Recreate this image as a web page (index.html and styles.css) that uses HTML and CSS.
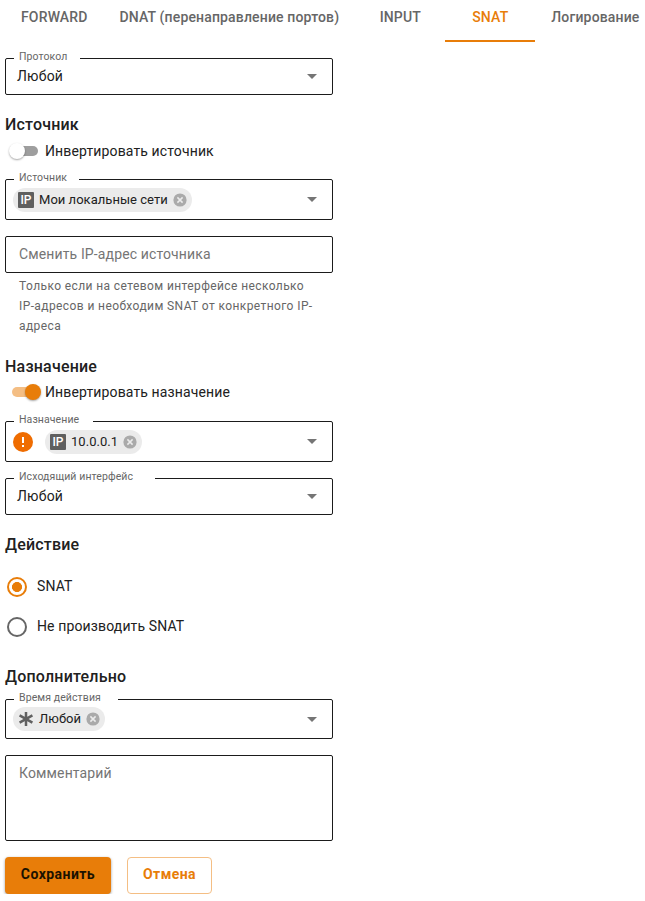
FILE: index.html
```html
<!DOCTYPE html>
<html lang="ru">
<head>
<meta charset="utf-8">
<title>SNAT</title>
<link rel="stylesheet" href="styles.css">
</head>
<body>
<nav class="tabs">
  <a class="tab">FORWARD</a>
  <a class="tab">DNAT (перенаправление портов)</a>
  <a class="tab">INPUT</a>
  <a class="tab tab-active">SNAT</a>
  <a class="tab">Логирование</a>
</nav>
<form class="form">
  <div class="field">
    <span class="label label-protocol">Протокол</span>
    <span class="value">Любой</span>
    <i class="arrow"></i>
  </div>

  <h2 class="heading heading-source">Источник</h2>
  <div class="toggle toggle-source">
    <span class="switch"><i class="knob"></i></span>
    <span>Инвертировать источник</span>
  </div>
  <div class="field field-chips field-source">
    <span class="label label-source">Источник</span>
    <span class="chip">
      <b class="ip">IP</b><span class="chip-text">Мои локальные сети</span>
      <svg class="close" viewBox="0 0 14 14"><circle cx="7" cy="7" r="6.6"/><path d="M4.4 4.4l5.2 5.2M9.6 4.4l-5.2 5.2"/></svg>
    </span>
    <i class="arrow"></i>
  </div>
  <div class="field field-input"><span class="placeholder">Сменить IP-адрес источника</span></div>
  <p class="hint">Только если на сетевом интерфейсе несколько<br>IP-адресов и необходим SNAT от конкретного IP-<br>адреса</p>

  <h2 class="heading heading-target">Назначение</h2>
  <div class="toggle">
    <span class="switch switch-on"><i class="knob"></i></span>
    <span>Инвертировать назначение</span>
  </div>
  <div class="field field-chips">
    <span class="label label-target">Назначение</span>
    <svg class="warn" viewBox="0 0 20 20"><circle cx="10" cy="10" r="10"/><path d="M9 5h2v6H9zM9 13h2v2H9z"/></svg>
    <span class="chip">
      <b class="ip">IP</b><span class="chip-text">10.0.0.1</span>
      <svg class="close" viewBox="0 0 14 14"><circle cx="7" cy="7" r="6.6"/><path d="M4.4 4.4l5.2 5.2M9.6 4.4l-5.2 5.2"/></svg>
    </span>
    <i class="arrow"></i>
  </div>
  <div class="field field-next">
    <span class="label label-interface">Исходящий интерфейс</span>
    <span class="value">Любой</span>
    <i class="arrow"></i>
  </div>

  <h2 class="heading heading-action">Действие</h2>
  <div class="radios">
    <div class="radio"><i class="dot dot-on"></i><span class="radio-text">SNAT</span></div>
    <div class="radio"><i class="dot"></i><span class="radio-text">Не производить SNAT</span></div>
  </div>

  <h2 class="heading heading-extra">Дополнительно</h2>
  <div class="field field-time">
    <span class="label label-time">Время действия</span>
    <span class="chip">
      <svg class="star" viewBox="0 0 16 16"><path d="M8 1v14M1.6 4.4l12.8 7.2M14.4 4.4L1.6 11.6"/></svg><span class="chip-text">Любой</span>
      <svg class="close" viewBox="0 0 14 14"><circle cx="7" cy="7" r="6.6"/><path d="M4.4 4.4l5.2 5.2M9.6 4.4l-5.2 5.2"/></svg>
    </span>
    <i class="arrow"></i>
  </div>
  <div class="field field-comment"><span class="placeholder">Комментарий</span></div>
  <div class="buttons">
    <button type="button" class="button save">Сохранить</button>
    <button type="button" class="button cancel">Отмена</button>
  </div>
</form>
</body>
</html>
```

FILE: styles.css
```css
* { box-sizing: border-box; }
body {
  margin: 0;
  background: #fff;
  color: #212121;
  font: 14px/20px Roboto, "Liberation Sans", sans-serif;
  letter-spacing: 0.13px;
  overflow: hidden;
}

.tabs { display: flex; height: 42px; padding-left: 5px; }
.tab {
  flex: none;
  min-width: 90px;
  padding: 7px 16px 0;
  text-align: center;
  white-space: nowrap;
  color: #666;
  font-weight: 500;
  letter-spacing: 0.155px;
}
.tab-active { color: #e87d09; border-bottom: 2px solid #e87d09; }

.form { width: 328px; margin: 16px 0 0 5px; }
.field {
  position: relative;
  display: flex;
  align-items: center;
  height: 37px;
  border: 1px solid #1b1b1b;
  border-radius: 2px;
}
.field-chips { height: 41px; margin-top: 17px; padding-left: 7px; }
.field-source { margin-top: 15px; }
.field-input { margin-top: 16px; }
.field-next { margin-top: 16px; }
.field-time { height: 40px; margin-top: 10px; padding-left: 7px; }
.field-comment { height: 86px; margin-top: 16px; align-items: flex-start; padding-top: 7px; }

.label {
  position: absolute;
  left: 8px;
  top: -10px;
  height: 16px;
  padding-left: 5px;
  background: #fff;
  color: #666;
  font-size: 10.5px;
  line-height: 16px;
  letter-spacing: 0.1px;
  white-space: nowrap;
}
.label-protocol { width: 66px; }
.label-source { width: 65px; }
.label-target { width: 79px; }
.label-interface { width: 141px; }
.label-time { width: 104px; }

.value { padding: 0 0 2px 11px; letter-spacing: 0.2px; }
.placeholder { padding: 0 0 2px 13px; color: #757575; }
.arrow {
  margin: 0 15px 0 auto;
  border: 5px solid transparent;
  border-top-color: #757575;
  border-bottom: 0;
}

.heading { margin: 0; font-size: 16px; line-height: 24px; font-weight: 500; letter-spacing: 0.2px; }
.heading-source { margin-top: 18px; }
.heading-target { margin-top: 19px; }
.heading-action { margin-top: 18px; }
.heading-extra { margin-top: 18px; }

.toggle { display: flex; align-items: center; height: 25px; padding-left: 7px; }
.toggle-source { margin-top: 1px; height: 26px; }
.switch { position: relative; width: 26px; height: 10px; margin-right: 7px; border-radius: 5px; background: #9e9e9e; }
.knob {
  position: absolute;
  top: -3px;
  left: -3px;
  width: 16px;
  height: 16px;
  border-radius: 50%;
  background: #fff;
  box-shadow: 0 1px 2px rgba(0, 0, 0, .35);
}
.switch-on { background: #f4be84; }
.switch-on .knob { left: 13px; background: #e87d09; }

.chip { display: flex; align-items: center; height: 24px; padding: 0 5px; border-radius: 12px; background: #ebebeb; }
.chip-text { margin: 0 5px; font-size: 13px; letter-spacing: 0.03px; }
.ip { width: 16px; height: 16px; border-radius: 1px; background: #5f5f5f; color: #fff; font-size: 12px; font-weight: 500; line-height: 16px; text-align: center; letter-spacing: 0; }
.close { width: 14px; height: 14px; fill: #aaa; }
.close path { stroke: #ebebeb; stroke-width: 1.5; }
.star { width: 16px; height: 16px; fill: none; stroke: #606060; stroke-width: 2.5; }
.warn { width: 20px; height: 20px; margin-right: 12px; fill: #ef6c00; }
.warn path { fill: #fff; }

.hint { margin: 3px 0 0 14px; color: #666; font-size: 12px; line-height: 20px; letter-spacing: 0.4px; white-space: nowrap; }

.radios { margin-top: 10px; }
.radio { display: flex; align-items: center; height: 40px; padding-left: 2px; }
.radio-text { padding-bottom: 2px; }
.dot { width: 20px; height: 20px; margin-right: 10px; border: 2px solid #666; border-radius: 50%; }
.dot-on { border-color: #e87d09; background: radial-gradient(circle, #e87d09 4.7px, transparent 5.3px); }

.buttons { display: flex; gap: 16px; margin-top: 16px; }
.button {
  height: 37px;
  padding: 0 0 3px;
  border: 0;
  border-radius: 4px;
  font: 700 14px/20px Roboto, "Liberation Sans", sans-serif;
  letter-spacing: 0.45px;
}
.save { width: 106px; background: #e87d09; color: #1b1200; box-shadow: 0 1px 3px rgba(0, 0, 0, .4); }
.cancel { width: 85px; border: 1px solid #f4be84; background: #fff; color: #e87d09; }
```
